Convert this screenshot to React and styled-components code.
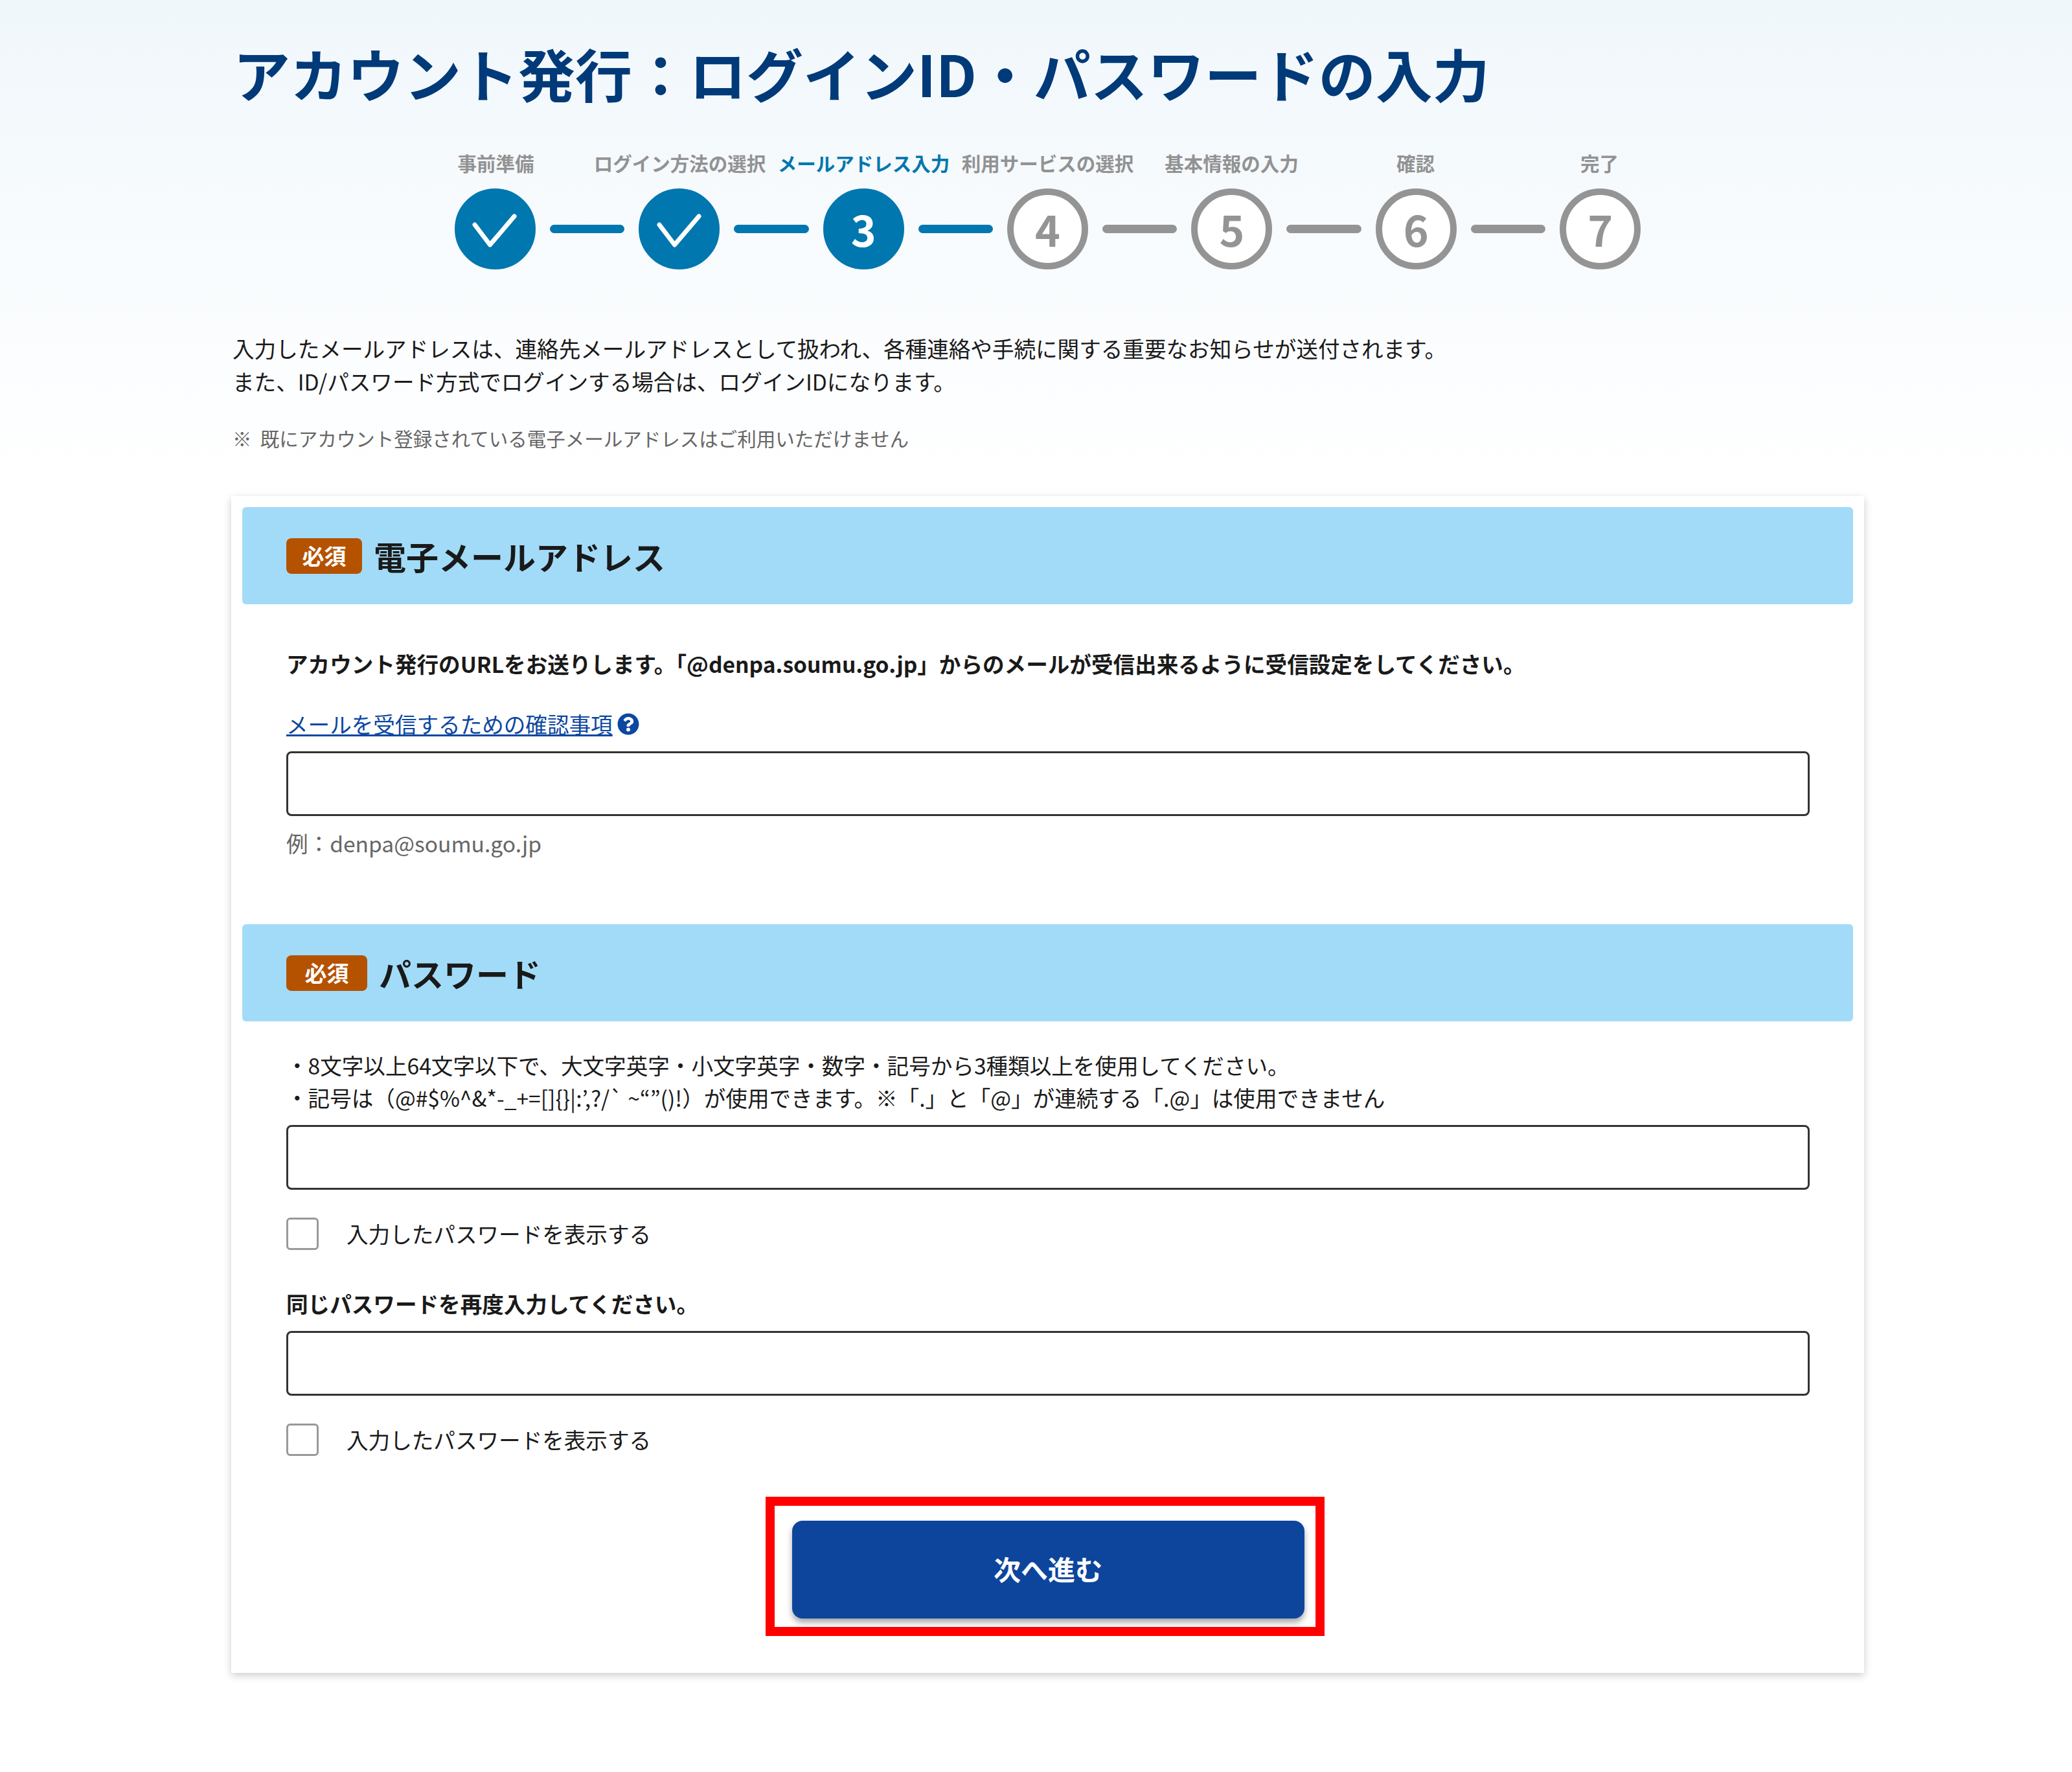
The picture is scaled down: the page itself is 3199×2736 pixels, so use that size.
import React from "react";
import styled, { createGlobalStyle } from "styled-components";
import { FaQuestionCircle } from "react-icons/fa";

const GlobalStyle = createGlobalStyle`
  html, body {
    margin: 0;
    padding: 0;
  }
  body {
    background: #ffffff;
    color: #1a1a1a;
    font-family: "Noto Sans CJK JP", "Noto Sans", sans-serif;
  }
`;

const steps = [
  { label: "事前準備", state: "done" },
  { label: "ログイン方法の選択", state: "done" },
  { label: "メールアドレス入力", state: "current", num: 3 },
  { label: "利用サービスの選択", state: "todo", num: 4 },
  { label: "基本情報の入力", state: "todo", num: 5 },
  { label: "確認", state: "todo", num: 6 },
  { label: "完了", state: "todo", num: 7 },
];

const App = () => {
  return (
    <>
      <GlobalStyle />
      <Page>
        <Container>
          <Title>アカウント発行：ログインID・パスワードの入力</Title>
          <StepLabels>
            {steps.map((s) => (
              <StepLabel key={s.label} $current={s.state === "current"}>
                {s.label}
              </StepLabel>
            ))}
          </StepLabels>
          <StepTrack>
            {steps.map((s, i) => (
              <React.Fragment key={s.label}>
                {i > 0 && <Connector $on={i <= 3} />}
                <Circle $todo={s.state === "todo"}>
                  {s.state === "done" ? (
                    <svg width="70" height="56" viewBox="0 0 70 56" fill="none">
                      <path
                        d="M4 21 L27.5 52 L65 8"
                        stroke="#fff"
                        strokeWidth="7"
                        strokeLinecap="round"
                        strokeLinejoin="round"
                      />
                    </svg>
                  ) : (
                    <Digit>{s.num}</Digit>
                  )}
                </Circle>
              </React.Fragment>
            ))}
          </StepTrack>

          <Intro>
            入力したメールアドレスは、連絡先メールアドレスとして扱われ、各種連絡や手続に関する重要なお知らせが送付されます。
            <br />
            また、ID/パスワード方式でログインする場合は、ログインIDになります。
          </Intro>
          <Note>※&nbsp;&nbsp;既にアカウント登録されている電子メールアドレスはご利用いただけません</Note>

          <Card>
            <SectionHead>
              <Badge $w="117px">必須</Badge>
              <SectionTitle>電子メールアドレス</SectionTitle>
            </SectionHead>
            <SectionBody>
              <Lead>
                アカウント発行のURLをお送りします。「@denpa.soumu.go.jp」からのメールが受信出来るように受信設定をしてください。
              </Lead>
              <HelpRow>
                <HelpLink href="#">メールを受信するための確認事項</HelpLink>
                <FaQuestionCircle size={34} color="#0d47a1" />
              </HelpRow>
              <TextInput type="text" />
              <Example>例：denpa@soumu.go.jp</Example>
            </SectionBody>

            <SectionHead $second>
              <Badge $w="125px">必須</Badge>
              <SectionTitle>パスワード</SectionTitle>
            </SectionHead>
            <SectionBody $tight>
              <Rules>
                ・8文字以上64文字以下で、大文字英字・小文字英字・数字・記号から3種類以上を使用してください。
                <br />
                ・記号は（@#$%^&amp;*-_+=[]{"{}"}|:’,?/` ~“”()!）が使用できます。※「.」と「@」が連続する「.@」は使用できません
              </Rules>
              <TextInput type="password" />
              <ShowRow>
                <CheckBox type="checkbox" />
                入力したパスワードを表示する
              </ShowRow>
              <Repeat>同じパスワードを再度入力してください。</Repeat>
              <TextInput type="password" />
              <ShowRow>
                <CheckBox type="checkbox" />
                入力したパスワードを表示する
              </ShowRow>
              <ButtonRow>
                <Highlight>
                  <NextButton type="button">次へ進む</NextButton>
                </Highlight>
              </ButtonRow>
            </SectionBody>
          </Card>
        </Container>
      </Page>
    </>
  );
};

const Page = styled.div`
  min-height: 2736px;
  box-sizing: border-box;
  padding: 52px 0 0 357px;
  background: linear-gradient(180deg, #f0f7fb 0, #fdfeff 640px, #ffffff 760px);
`;

const Container = styled.main`
  width: 2521px;
`;

const Title = styled.h1`
  margin: 0 0 59px 3px;
  font-size: 88px;
  line-height: 120px;
  font-weight: 700;
  color: #003a78;
  white-space: nowrap;
`;

const StepLabels = styled.div`
  display: flex;
  justify-content: center;
`;

const StepLabel = styled.span`
  width: 284px;
  text-align: center;
  font-size: 29.5px;
  line-height: 40px;
  font-weight: 700;
  white-space: nowrap;
  color: ${(p) => (p.$current ? "#0077ae" : "#929292")};
`;

const StepTrack = styled.div`
  display: flex;
  justify-content: center;
  align-items: center;
  gap: 22px;
  margin-top: 20px;
`;

const Circle = styled.div`
  width: 125px;
  height: 125px;
  box-sizing: border-box;
  border-radius: 50%;
  display: flex;
  align-items: center;
  justify-content: center;
  font-size: 66px;
  line-height: 1;
  font-weight: 700;
  background: ${(p) => (p.$todo ? "#ffffff" : "#0077ae")};
  border: 10px solid ${(p) => (p.$todo ? "#949494" : "#0077ae")};
  color: ${(p) => (p.$todo ? "#949494" : "#ffffff")};
`;

const Digit = styled.span`
  display: block;
  margin-top: -4px;
`;

const Connector = styled.div`
  width: 115.4px;
  height: 13px;
  border-radius: 7px;
  background: ${(p) => (p.$on ? "#0077ae" : "#949494")};
`;

const Intro = styled.p`
  margin: 96px 0 0 2px;
  font-size: 33.6px;
  line-height: 51px;
  color: #1a1a1a;
  white-space: nowrap;
`;

const Note = styled.p`
  margin: 40px 0 0 2px;
  font-size: 29.5px;
  line-height: 44px;
  color: #666666;
`;

const Card = styled.section`
  margin-top: 68px;
  padding: 17px 17px 57px;
  box-sizing: border-box;
  background: #ffffff;
  box-shadow: 0 4px 12px rgba(0, 0, 0, 0.2);
`;

const SectionHead = styled.div`
  height: 150px;
  box-sizing: border-box;
  display: flex;
  align-items: center;
  gap: 18px;
  padding-left: 68px;
  border-radius: 6px;
  background: #a2dbf7;
  margin-top: ${(p) => (p.$second ? "100px" : "0")};
`;

const Badge = styled.span`
  width: ${(p) => p.$w};
  height: 55px;
  border-radius: 8px;
  display: flex;
  align-items: center;
  justify-content: center;
  background: #b55200;
  color: #ffffff;
  font-size: 34px;
  line-height: 1;
  font-weight: 700;
`;

const SectionTitle = styled.h2`
  margin: 0;
  font-size: 50px;
  line-height: 60px;
  font-weight: 700;
  color: #1a1a1a;
`;

const SectionBody = styled.div`
  padding: ${(p) => (p.$tight ? "43px" : "67px")} 67px 0 68px;
`;

const Lead = styled.p`
  margin: 0 0 43px;
  font-size: 33.6px;
  line-height: 50px;
  font-weight: 700;
  white-space: nowrap;
`;

const HelpRow = styled.div`
  display: flex;
  align-items: center;
  gap: 7px;
  height: 50px;
  margin-bottom: 17px;
`;

const HelpLink = styled.a`
  font-size: 33.6px;
  line-height: 50px;
  color: #0d47a1;
  text-decoration: underline;
`;

const TextInput = styled.input`
  display: block;
  width: 100%;
  height: 100px;
  box-sizing: border-box;
  border: 3px solid #333333;
  border-radius: 8px;
  background: #ffffff;
  padding: 0 20px;
  font: inherit;
`;

const Example = styled.p`
  margin: 17px 0 0;
  font-size: 33.6px;
  line-height: 50px;
  color: #666666;
`;

const Rules = styled.p`
  margin: 0 0 17px;
  font-size: 33.6px;
  line-height: 50px;
  white-space: nowrap;
`;

const ShowRow = styled.label`
  display: flex;
  align-items: center;
  gap: 43px;
  height: 50px;
  margin-top: 43px;
  font-size: 33.6px;
  line-height: 50px;
`;

const CheckBox = styled.input`
  appearance: none;
  width: 50px;
  height: 50px;
  margin: 0;
  box-sizing: border-box;
  background: #ffffff;
  border: 3px solid #999999;
  border-radius: 6px;
`;

const Repeat = styled.p`
  margin: 58px 0 17px;
  font-size: 33.6px;
  line-height: 50px;
  font-weight: 700;
`;

const ButtonRow = styled.div`
  display: flex;
  justify-content: center;
  margin-top: 63px;
  padding-right: 10px;
`;

const Highlight = styled.div`
  border: 14px solid #ff0000;
  padding: 23px 17px 13px 27px;
`;

const NextButton = styled.button`
  display: block;
  width: 791px;
  height: 151px;
  border: 0;
  border-radius: 16px;
  padding: 0 0 4px;
  background: #0d459d;
  color: #ffffff;
  font-family: inherit;
  font-size: 42px;
  font-weight: 700;
  box-shadow: 0 6px 10px rgba(0, 0, 0, 0.35);
`;

export default App;
